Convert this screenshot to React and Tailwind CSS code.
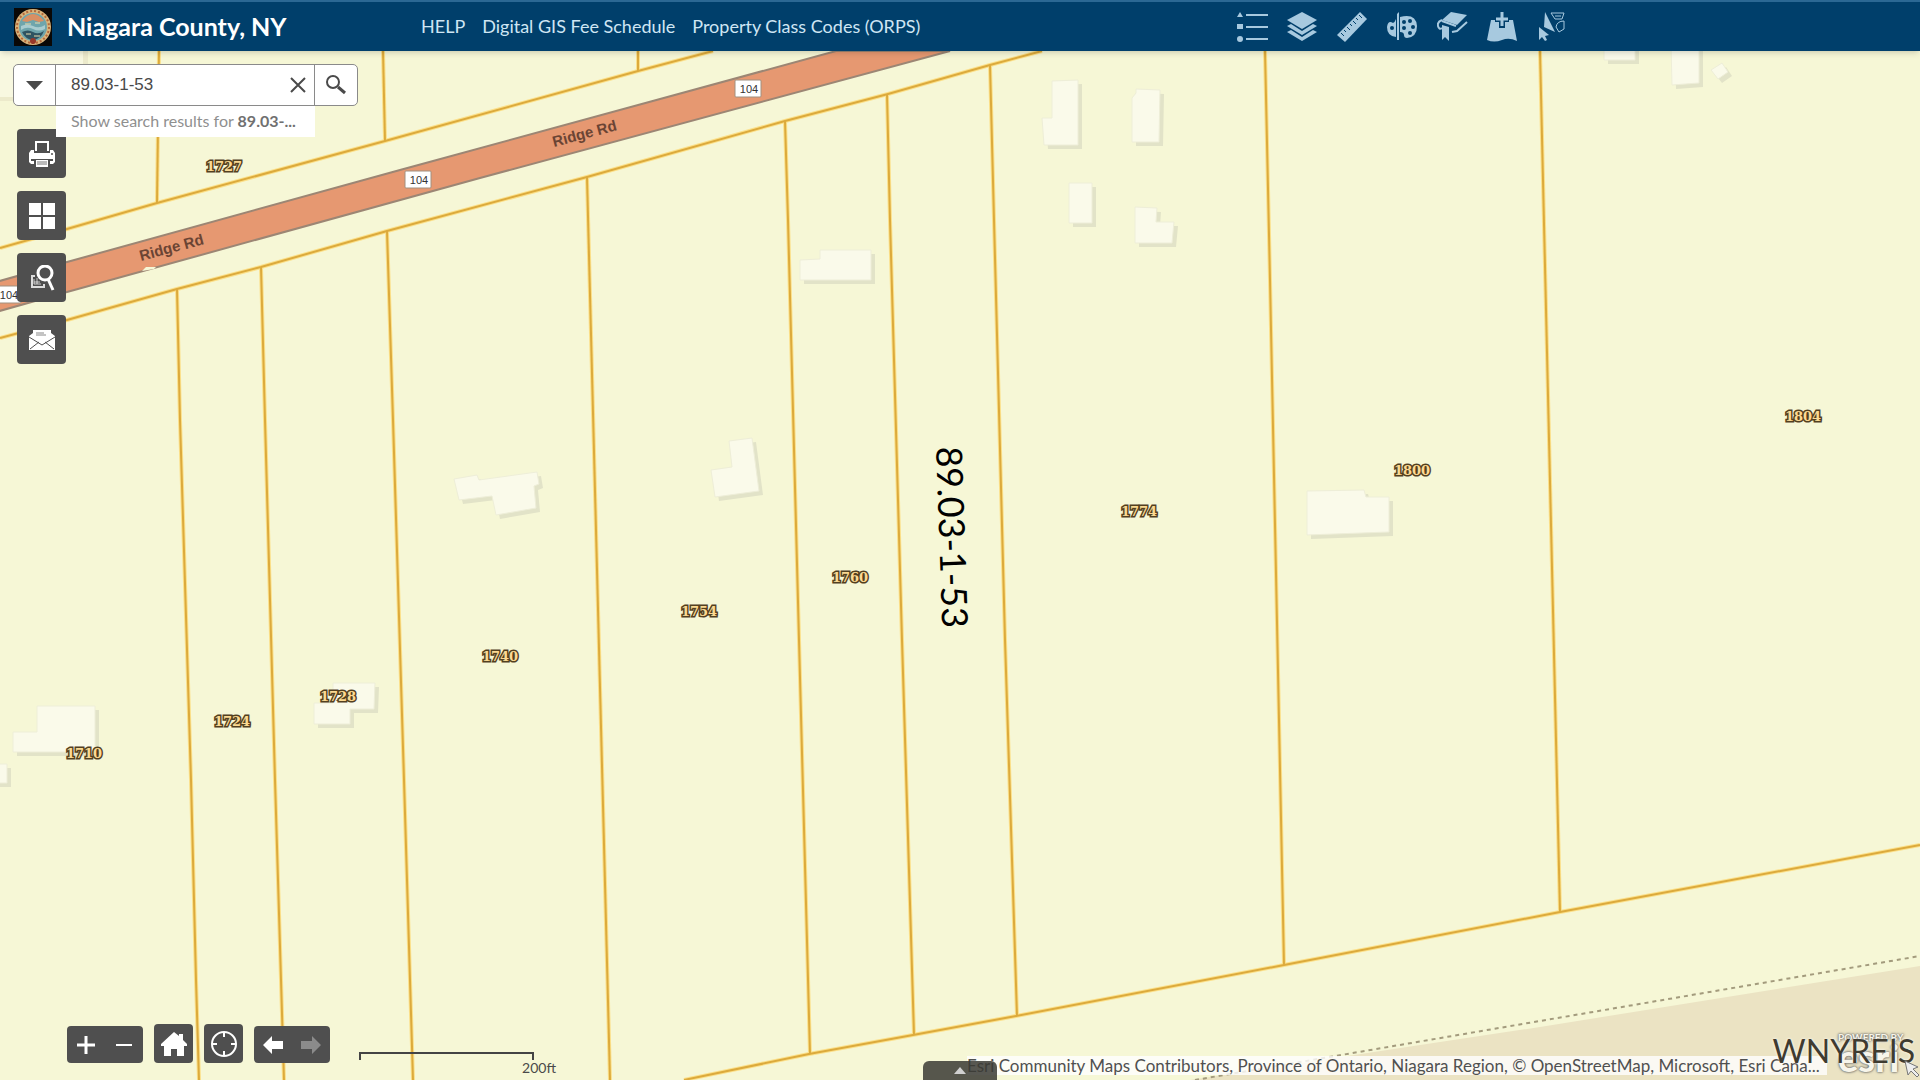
import React, { useState } from "react";

const parcelLines = [
  "M0 248 67 229 157 203 385 141 638 71 713 51",
  "M0 338 67 320 177 289 261 267 387 231 587 177 785 121 888 94 990 65 1042 51",
  "M684 1080 809 1054 913 1035 1016 1016 1284 965 1560 912 1920 845",
  "M159 51 157 203",
  "M383 51 385 141",
  "M638 51V71",
  "M177 289 180 420 191 780 196 980 199 1080",
  "M261 267 265 420 275 780 281 980 284 1080",
  "M387 231 393 420 404 780 410 980 413 1080",
  "M587 177 610 1080",
  "M785 121 788 220 799 640 810 1054",
  "M887 94 890 220 902 640 914 1035",
  "M990 65 994 220 1005 640 1017 1016",
  "M1265 51 1270 280 1284 965",
  "M1540 51 1560 912",
];

const buildings = [
  "1052,81 1078,80 1078,145 1044,145 1042,118 1052,118",
  "1136,89 1160,90 1159,142 1132,142 1132,98 1136,93",
  "1069,183 1092,183 1092,223 1069,223",
  "1135,207 1157,208 1156,222 1174,222 1172,243 1135,243",
  "820,250 871,250 871,280 800,280 800,260 820,259",
  "729,441 752,438 759,491 715,497 711,470 732,467",
  "454,479 477,475 479,480 537,472 539,484 534,486 536,508 496,515 492,496 459,500",
  "37,706 95,706 95,752 13,752 13,732 37,732",
  "-4,764 7,764 7,783 -4,783",
  "333,683 375,683 374,709 350,709 350,724 314,724 314,703 333,703",
  "1307,491 1364,490 1366,497 1389,497 1389,532 1307,535",
  "1604,45 1635,45 1635,60 1604,60",
  "1671,45 1699,45 1699,83 1672,85",
  "1711,70 1722,63 1728,72 1718,79",
];

const addresses = [
  ["1727", 224, 166],
  ["1724", 232, 721],
  ["1728", 338, 696],
  ["1740", 500, 656],
  ["1754", 699, 611],
  ["1760", 850, 577],
  ["1774", 1139, 511],
  ["1800", 1412, 470],
  ["1804", 1803, 416],
  ["1710", 84, 753],
];

const shields = [
  [418, 179],
  [748, 88],
  [8, 294],
];

function ParcelMap() {
  return (
    <svg
      className="absolute inset-0 h-full w-full"
      viewBox="0 51 1920 1029"
      preserveAspectRatio="xMidYMid slice"
      role="img"
      aria-label="Parcel map"
    >
      <rect x="0" y="51" width="1920" height="1029" fill="#f6f7d6" />
      <path d="M0 51H88V101H0Z" fill="#eceacb" />
      <path d="M0 51H83V97H0Z" fill="#f8f8e0" />
      <path d="M1190 1080 1440 1042 1540 1027 1920 966V1080Z" fill="#ebe3c3" />
      <path d="M1195 1080 1920 956" stroke="#a39b7d" strokeWidth="2" strokeDasharray="4 4" fill="none" />
      <path d="M-4 282 67 262 400 170 836 51H950L480 178 67 292-4 312Z" fill="#e69871" stroke="#9c8674" strokeWidth="2" />
      <path d="M142 271 146 267 156 267 154 269Z" fill="#f6f7d6" />
      {buildings.map((b) => (
        <g key={b}>
          <polygon points={b} fill="#e2e3c8" transform="translate(4 4)" />
          <polygon points={b} fill="#fafaea" stroke="#eeeed8" strokeWidth="1" />
        </g>
      ))}
      <g fill="none" strokeLinejoin="round">
        {parcelLines.map((d) => (
          <path key={d} d={d} stroke="#fbe08a" strokeWidth="4" />
        ))}
        {parcelLines.map((d) => (
          <path key={d} d={d} stroke="#dcaa3c" strokeWidth="2" />
        ))}
      </g>
      <g className="font-['Liberation_Sans'] text-[11px]" textAnchor="middle">
        {shields.map(([x, y]) => (
          <g key={x}>
            <rect x={x - 13} y={y - 8} width="26" height="17" rx="1" fill="#fff" stroke="#a09080" />
            <text x={x + 1} y={y + 5} fill="#333">104</text>
          </g>
        ))}
      </g>
      <g className="font-['Liberation_Sans'] text-[15px] font-bold" fill="#6b4434">
        <text transform="translate(141 261) rotate(-15)">Ridge Rd</text>
        <text transform="translate(554 147) rotate(-15)">Ridge Rd</text>
      </g>
      <g className="font-['DejaVu_Serif'] text-[13px] font-bold" textAnchor="middle">
        {addresses.map(([n, x, y]) => (
          <text key={n} x={x} y={y + 5} fill="#fcd992" stroke="#53401f" strokeWidth="3" paintOrder="stroke">
            {n}
          </text>
        ))}
      </g>
      <text className="font-['Lato'] text-[36px]" transform="translate(936 447) rotate(88)" fill="#000">
        89.03-1-53
      </text>
    </svg>
  );
}

function Seal() {
  return (
    <svg className="h-[38px] w-[38px]" viewBox="0 0 38 38" role="img" aria-label="Niagara County seal">
      <rect width="38" height="38" fill="#0a0806" />
      <circle cx="19" cy="19" r="18" fill="#d9b57c" />
      <circle cx="19" cy="19" r="16" fill="none" stroke="#b4683c" strokeWidth="2" strokeDasharray="2 2" />
      <circle cx="19" cy="19" r="14" fill="#6fa5ac" />
      <path d="M8 13q5-7 11-7t11 7l-5 1-6-2-6 2z" fill="#d98f63" />
      <path d="M7 18q6-3 12 0t12-1v4q-6 3-12 0t-12 1z" fill="#a9ccd0" />
      <path d="M8 24q6-3 11 0t11-1q-3 8-11 9-8-1-11-8z" fill="#2f5361" />
      <path d="M12 26h5M20 28h6M11 16h6M21 15h5" stroke="#e8dcae" />
      <circle cx="19" cy="33" r="3" fill="#96382a" />
    </svg>
  );
}

const tools = [
  ["Legend", (
    <g key="a">
      <path d="M0 5 3 0 6 5ZM0 12H6V17H0Z" />
      <circle cx="3" cy="27" r="3" />
      <path d="M9 2H31V4H9ZM9 14H31V16H9ZM9 26H31V28H9Z" />
    </g>
  )],
  ["Layer List", (
    <g key="b">
      <path d="M15 0 30 8 15 17 0 8Z" />
      <path d="M0 14 4 12 15 19 26 12 30 14 15 23ZM0 20 4 18 15 25 26 18 30 20 15 29Z" />
    </g>
  )],
  ["Measurement", (
    <g key="c">
      <path d="M23 0 30 7 8 30 0 23Z" />
      <path d="m4 21 3 3M7 18l2 2M10 15l3 3M13 12l2 2M16 9l3 3M19 6l2 2M22 3l3 3" stroke="#003f6b" />
    </g>
  )],
  ["Draw", (
    <g key="d">
      <path d="M9 7V25Q0 24 0 15 1 8 6 11 8 10 9 7ZM13 5Q29 1 30 14 30 25 20 26 17 26 17 23 17 20 13 20Z" />
      <path d="M10 2 12 0V28H10Z" />
      <g fill="#003f6b">
        <circle cx="17" cy="10" r="2" />
        <circle cx="23" cy="9" r="2" />
        <circle cx="26" cy="15" r="2" />
        <circle cx="23" cy="21" r="2" />
        <circle cx="17" cy="16" r="2" />
        <circle cx="5" cy="16" r="2" />
      </g>
    </g>
  )],
  ["Bookmark", (
    <g key="e">
      <path d="M14 0 30 3 20 13 5 8Z" />
      <path d="M5 8Q0 10 1 14 2 18 5 16M15 20 20 19 30 10M5 9 19 14" fill="none" stroke="#a7c9df" strokeWidth="2" />
      <path d="M5 13 12 15V29L8 25 5 28Z" />
    </g>
  )],
  ["Add Data", (
    <g key="f">
      <path d="M4 8H26L30 29Q22 25 15 28 7 31 0 28Z" />
      <path d="M15 0V16M8 7H22" stroke="#003f6b" strokeWidth="6" />
      <path d="M15 0V14M9 7H21" stroke="#a7c9df" strokeWidth="3" />
    </g>
  )],
  ["Select", (
    <g key="g">
      <path d="M8 0 18 20 7 15ZM2 15 12 23 8 24 10 28 8 29 5 25 2 28Z" />
      <path d="M14 1H27L25 7H18ZM19 15Q20 9 27 9V17L22 20Z" fill="none" stroke="#a7c9df" strokeWidth="1" />
      <path d="M18 4H24" stroke="#a7c9df" />
    </g>
  )],
];

const panelButton =
  "flex h-[49px] w-[49px] items-center justify-center rounded bg-[#4f4f4f] text-white";

export default function App() {
  const [query, setQuery] = useState("89.03-1-53");
  return (
    <div className="flex min-h-screen flex-col bg-[#f6f7d6] font-['Lato',sans-serif]">
      <header className="relative z-10 flex h-[51px] items-center border-t-2 border-[#2b6894] bg-[#003f6b] pl-[14px] shadow-md">
        <Seal />
        <h1 className="w-[352px] pl-[15px] text-[25px] font-bold whitespace-nowrap text-white">Niagara County, NY</h1>
        <nav className="flex gap-[17px] pl-[17px] text-[18px] whitespace-nowrap text-[#cfe6f4]">
          <a href="#help">HELP</a>
          <a href="#fees">Digital GIS Fee Schedule</a>
          <a href="#codes">Property Class Codes (ORPS)</a>
        </nav>
        <div className="mr-[343px] ml-auto flex">
          {tools.map(([label, icon]) => (
            <button key={label} aria-label={label} className="flex w-[50px] justify-center">
              <svg className="h-[30px] w-[31px]" viewBox="0 0 31 30" fill="#a7c9df">
                {icon}
              </svg>
            </button>
          ))}
        </div>
      </header>

      <main className="relative flex-1 overflow-hidden">
        <ParcelMap />

        <div className="absolute top-[13px] left-[13px]">
          <form className="flex h-[42px] w-[345px] divide-x divide-[#8a8a8a] overflow-hidden rounded-[5px] border border-[#8a8a8a] bg-white text-[#4a4a4a]" onSubmit={(e) => e.preventDefault()}>
            <button type="button" aria-label="Search source" className="flex w-[42px] items-center justify-center">
              <svg className="h-[9px] w-[17px]" viewBox="0 0 17 9" fill="currentColor">
                <path d="M0 0H17L8.500 9Z" />
              </svg>
            </button>
            <div className="flex flex-1 items-center">
              <input
                aria-label="Search"
                className="w-[180px] flex-1 pl-[15px] font-['Liberation_Sans'] text-[17px] outline-none"
                value={query}
                onChange={(e) => setQuery(e.target.value)}
              />
              <button type="button" aria-label="Clear" className="px-2" onClick={() => setQuery("")}>
                <svg className="h-4 w-4" viewBox="0 0 16 16" stroke="currentColor" strokeWidth="2">
                  <path d="M1 1 15 15M15 1 1 15" />
                </svg>
              </button>
            </div>
            <button aria-label="Run search" className="flex w-[42px] items-center justify-center">
              <svg className="h-5 w-5" viewBox="0 0 20 20" fill="none" stroke="currentColor" strokeWidth="2">
                <circle cx="7" cy="7" r="6" />
                <path d="M12 12 19 18" strokeWidth="3" />
              </svg>
            </button>
          </form>
          <p className="relative z-10 ml-[43px] h-[31px] w-[259px] bg-white pl-[15px] text-base leading-[30px] whitespace-nowrap text-[#8f8f8f]">
            Show search results for <b className="text-[#707070]">89.03-...</b>
          </p>
          <div className="-mt-2 ml-1 flex w-[49px] flex-col gap-[13px]">
            <button aria-label="Print" className={panelButton}>
              <svg className="h-[26px] w-[26px]" viewBox="0 0 26 26" fill="currentColor">
                <path d="M6 0H20V10H6Z" />
                <path d="M8 2H18V10H8Z" fill="#4f4f4f" />
                <path d="M2 9H5V12H21V9H24L26 12V21L24 23H21V18H5V23H2L0 21V12Z" />
                <path d="M7 19H19V26H7Z" />
                <path d="M8 21H18M8 23H18" stroke="#777" />
                <circle cx="23" cy="13" r="1" fill="#4f4f4f" />
                <path d="M2 18H5V20H2ZM21 18H24V20H21Z" fill="#4f4f4f" />
              </svg>
            </button>
            <button aria-label="Basemap Gallery" className={panelButton}>
              <svg className="h-[26px] w-[26px]" viewBox="0 0 26 26" fill="currentColor">
                <path d="M0 0H12V12H0ZM14 0H26V12H14ZM0 14H12V26H0ZM14 14H26V26H14Z" />
              </svg>
            </button>
            <button aria-label="Property Search" className={panelButton}>
              <svg className="h-[26px] w-[26px]" viewBox="0 0 26 26" fill="none" stroke="currentColor">
                <path d="M6 11H3V22H15V19" strokeWidth="2" opacity=".8" />
                <path d="M5 14V19H12M5 17H11M8 13V19" strokeWidth="1" opacity=".7" />
                <circle cx="16" cy="8" r="7" strokeWidth="3" fill="#4f4f4f" />
                <path d="M19 14 24 25" strokeWidth="3" />
              </svg>
            </button>
            <button aria-label="Mailing Labels" className={panelButton}>
              <svg className="h-5 w-[26px]" viewBox="0 0 26 20" fill="currentColor">
                <path d="M0 6 4 3V0H22V3L26 6V20H0Z" />
                <path d="M0 7 13 15 26 7M1 19 10 12M25 19 16 12" fill="none" stroke="#4f4f4f" />
                <path d="M7 3H15M7 5H17" stroke="#888" />
              </svg>
            </button>
          </div>
        </div>

        <div className="absolute bottom-[17px] left-[67px] flex items-end gap-[11px] text-white">
          <div className="flex h-[37px] w-[76px] rounded bg-[#4f4f4f]">
            <button aria-label="Zoom in" className="flex flex-1 items-center justify-center">
              <svg className="h-5 w-5" viewBox="0 0 20 20" stroke="currentColor" strokeWidth="3">
                <path d="M10 1V19M1 10H19" />
              </svg>
            </button>
            <button aria-label="Zoom out" className="flex flex-1 items-center justify-center">
              <svg className="h-5 w-4" viewBox="0 0 16 20" stroke="currentColor" strokeWidth="2">
                <path d="M0 10H16" />
              </svg>
            </button>
          </div>
          <button aria-label="Default extent" className="flex h-[39px] w-[39px] items-center justify-center rounded bg-[#4f4f4f]">
            <svg className="h-6 w-[26px]" viewBox="0 0 26 24" fill="currentColor">
              <path d="M13 0 18 4V2H22V8L26 12V14H23V24H16V17H10V24H3V14H0V12Z" />
            </svg>
          </button>
          <button aria-label="My location" className="flex h-[39px] w-[39px] items-center justify-center rounded bg-[#4f4f4f]">
            <svg className="h-[26px] w-[26px]" viewBox="0 0 26 26" fill="none" stroke="currentColor" strokeWidth="2">
              <circle cx="13" cy="13" r="12" />
              <path d="M13 1V6M13 20V25M1 13H6M20 13H25" />
            </svg>
          </button>
          <div className="flex h-[37px] w-[76px] rounded bg-[#4f4f4f]">
            <button aria-label="Previous extent" className="flex flex-1 items-center justify-center">
              <svg className="h-[18px] w-5" viewBox="0 0 20 18" fill="currentColor">
                <path d="M0 9 9 0V5H20V13H9V18Z" />
              </svg>
            </button>
            <button aria-label="Next extent" disabled className="flex flex-1 items-center justify-center text-[#8b8b8b]">
              <svg className="h-[18px] w-5" viewBox="0 0 20 18" fill="currentColor">
                <path d="M20 9 11 0V5H0V13H11V18Z" />
              </svg>
            </button>
          </div>
        </div>

        <div className="absolute bottom-[4px] left-[359px] w-[197px] text-[#4a4a4a]">
          <div className="h-2 w-[175px] border-x-2 border-t-2 border-[#444]" />
          <p className="text-right text-sm leading-4">200ft</p>
        </div>

        <p className="absolute right-[93px] bottom-[5px] w-[860px] bg-white/80 text-[17px] leading-[19px] whitespace-nowrap text-[#505050]">
          Esri Community Maps Contributors, Province of Ontario, Niagara Region, © OpenStreetMap, Microsoft, Esri Cana...
        </p>

        <button aria-label="Open attribute table" className="absolute bottom-0 left-1/2 flex h-[19px] w-[74px] -translate-x-1/2 items-center justify-center rounded-t-md bg-[#3a3a34]/85">
          <svg className="h-[7px] w-3" viewBox="0 0 12 7" fill="#d0d0d0">
            <path d="M6 0 12 7H0Z" />
          </svg>
        </button>

        <a href="#esri" className="absolute right-[12px] bottom-0 flex w-[70px] flex-col text-[#f7f5ea] [text-shadow:0_0_2px_#555,0_0_3px_#777]">
          <span className="text-[10px] leading-[10px] font-bold whitespace-nowrap">POWERED BY</span>
          <span className="-mt-2 text-[38px] leading-[46px] font-black">esri</span>
        </a>
        <p className="absolute right-[5px] bottom-[13px] text-[32px] leading-8 text-[#3f3b30] [text-shadow:0_0_3px_#fff]">WNYREIS</p>
        <svg className="absolute right-0 bottom-[2px] h-[18px] w-4" viewBox="0 0 16 18" fill="#eee" stroke="#777" strokeWidth="1">
          <path d="M1 1 14 7 9 9 15 15 13 17 7 11 4 15Z" />
        </svg>
      </main>
    </div>
  );
}
